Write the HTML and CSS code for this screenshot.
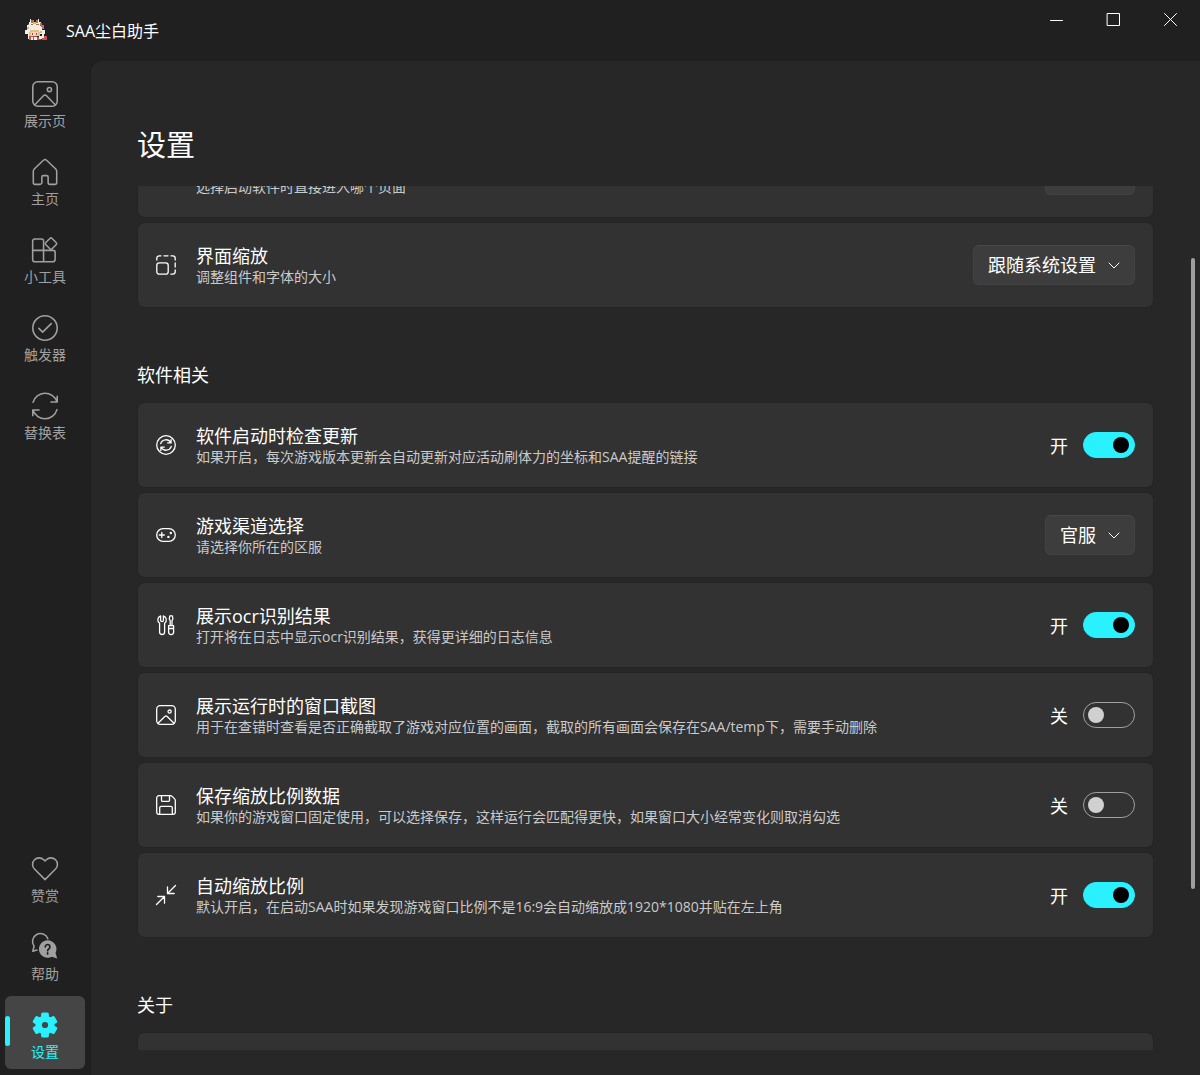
FILE: index.html
```html
<!DOCTYPE html>
<html lang="zh-CN">
<head>
    <meta charset="UTF-8">
    <meta name="viewport" content="width=device-width, initial-scale=1.0">
    <title>SAA尘白助手</title>
    <link rel="stylesheet" href="styles.css">
</head>
<body>
    <header class="titlebar">
        <svg class="app-icon" viewBox="0 0 22 22" shape-rendering="crispEdges" aria-hidden="true">
            <path fill="#8a8580" d="M1 11h3v2H1zM3 5h3v3H3zM17 6h2v4h-2z"/>
            <path fill="#f1ece6" d="M5 0h1v3H5zM13 0h1v3h-1zM4 3h12v3H4zM2 6h15v5H2zM0 11h20v4H0zM3 15h3v5H3zM17 11h2v8h-2z"/>
            <path fill="#a87842" d="M6 1h3v3H6zM11 1h2v3h-2zM6 5h2v1H6zM11 5h3v1h-3z"/>
            <path fill="#bdb8b2" d="M8 3h3v2H8zM2 8h2v2H2zM15 12h2v2h-2z"/>
            <path fill="#d9535a" d="M15 4h2v3h-2zM16 7h2v1h-2z"/>
            <path fill="#e3c184" d="M5 11h9v3H5zM4 13h2v5H4zM13 13h2v4h-2z"/>
            <path fill="#f5d3bd" d="M6 13h7v4H6z"/>
            <path fill="#a04848" d="M7 14h1v2H7zM11 14h1v2h-1zM8 17h4v1H8z"/>
            <path fill="#c8564f" d="M4 17h5v4H4zM12 18h4v3h-4zM19 17h3v4h-3zM17 19h2v2h-2z"/>
            <path fill="#f6f1ee" d="M6 18h2v3H6zM14 17h3v3h-3zM9 18h3v3H9z"/>
        </svg>
        <span class="app-name">SAA尘白助手</span>
        <div class="window-buttons">
            <button type="button" aria-label="最小化"><svg viewBox="0 0 14 14"><path d="M.5 7.5h12"/></svg></button>
            <button type="button" aria-label="最大化"><svg viewBox="0 0 14 14"><path d="M.5 .5h12v12H.5z"/></svg></button>
            <button type="button" aria-label="关闭"><svg viewBox="0 0 14 14"><path d="M.5 .5l12 12M12.5 .5l-12 12"/></svg></button>
        </div>
    </header>

    <div class="window-body">
        <nav class="sidebar">
            <a class="nav-item" href="#display">
                <svg viewBox="0 0 20 20"><rect x=".6" y=".6" width="18.8" height="18.8" rx="3.8"/><circle cx="13.4" cy="6.6" r="1.6"/><path d="M2 18.4l6.8-7a1.7 1.7 0 0 1 2.4 0l6.8 7"/></svg>
                展示页
            </a>
            <a class="nav-item" href="#home">
                <svg viewBox="0 0 20 20"><path d="M8.8 1L1.9 7.5A3 3 0 0 0 1 9.6V18a1.5 1.5 0 0 0 1.5 1.5h3.7a1.4 1.4 0 0 0 1.4-1.4v-4.3a1 1 0 0 1 1-1h2.8a1 1 0 0 1 1 1v4.3a1.4 1.4 0 0 0 1.4 1.4h3.7A1.5 1.5 0 0 0 19 18V9.6a3 3 0 0 0-.9-2.1L11.2 1a1.7 1.7 0 0 0-2.4 0z"/></svg>
                主页
            </a>
            <a class="nav-item" href="#tools">
                <svg viewBox="0 0 20 20"><path d="M8.9 10.3V3a1.4 1.4 0 0 0-1.4-1.4H2A1.5 1.5 0 0 0 .5 3.1v14.2a1.8 1.8 0 0 0 1.8 1.8H16a1.8 1.8 0 0 0 1.8-1.8v-5.500a1.500 1.500 0 0 0-1.500-1.500zM.5 10.300h8.400v8.800"/><rect x="11.200" y="1.700" width="6.800" height="6.800" rx="1.200" transform="rotate(45 14.600 5.100)"/></svg>
                小工具
            </a>
            <a class="nav-item" href="#trigger">
                <svg viewBox="0 0 20 20"><circle cx="10" cy="10" r="9.400"/><path d="M5.300 10.300l2.900 2.900 6.600-6.600"/></svg>
                触发器
            </a>
            <a class="nav-item" href="#table">
                <svg viewBox="0 0 20 20"><path d="M.8 7.200A9.600 9.600 0 0 1 19.100 6.600M14.600 6.900h4.800V2.600M19.200 12.800A9.600 9.600 0 0 1 .9 13.400M5.400 13.100H.6v4.300"/></svg>
                替换表
            </a>
            <a class="nav-item nav-bottom" href="#donate">
                <svg viewBox="0 0 20 20"><path d="M10 18.200L1.900 10A5 5 0 0 1 9 2.900l1 1 1-1A5 5 0 0 1 18.100 10z"/></svg>
                赞赏
            </a>
            <a class="nav-item" href="#help">
                <svg viewBox="0 0 20 20"><path d="M3.800 12.400l-3.200.9 1-3.900A6.100 6.100 0 1 1 12.200 3.600"/><path class="solid" d="M12 4.900a6.700 6.700 0 1 0 3.200 12.600l4.200 1.400-1.300-4.300A6.700 6.700 0 0 0 12 4.900z"/><path class="cut" d="M10.200 9.900a1.800 1.800 0 1 1 2.800 1.500c-.7.500-1 .8-1 1.500M12 14.500v.8"/></svg>
                帮助
            </a>
            <a class="nav-item active" href="#settings" aria-current="page">
                <svg viewBox="0 0 20 20"><g class="solid"><circle cx="10" cy="10" r="7.400"/><rect x="7" y=".4" width="6" height="19.200" rx="1.200"/><rect x="7" y=".4" width="6" height="19.200" rx="1.200" transform="rotate(60 10 10)"/><rect x="7" y=".4" width="6" height="19.200" rx="1.200" transform="rotate(120 10 10)"/></g><circle class="hole" cx="10" cy="10" r="2.400"/></svg>
                设置
            </a>
        </nav>

        <main class="page">
            <div class="content">
                <h1>设置</h1>
                <div class="scroll-area" id="scrollArea">
                    <section class="group">
                        <div class="card">
                            <svg viewBox="0 0 20 20"><path d="M1 1h18v18H1z"/></svg>
                            <div class="card-text">
                                <label for="startPage">启动时进入</label>
                                <p>选择启动软件时直接进入哪个页面</p>
                            </div>
                            <div class="combo">
                                <select id="startPage"><option>主页</option></select>
                                <svg viewBox="0 0 12 12"><path d="M1 4l5 5 5-5"/></svg>
                            </div>
                        </div>
                        <div class="card">
                            <svg viewBox="0 0 20 20"><rect x=".8" y="7.800" width="11.400" height="11.400" rx="2.500"/><path d="M.8 5V3.200A2.400 2.400 0 0 1 3.200.8H5M8 .8h4M15 .8h1.800a2.400 2.400 0 0 1 2.400 2.400V5M19.200 8v4M19.200 15v1.800a2.400 2.400 0 0 1-2.400 2.400H15"/></svg>
                            <div class="card-text">
                                <label for="zoom">界面缩放</label>
                                <p>调整组件和字体的大小</p>
                            </div>
                            <div class="combo">
                                <select id="zoom"><option>跟随系统设置</option></select>
                                <svg viewBox="0 0 12 12"><path d="M1 4l5 5 5-5"/></svg>
                            </div>
                        </div>
                    </section>

                    <section class="group">
                        <h2>软件相关</h2>
                        <div class="card">
                            <svg viewBox="0 0 20 20"><circle cx="10" cy="10" r="9.300"/><path d="M4.700 8.600a5.500 5.500 0 0 1 10-1.100M15.100 4.600v3.300h-3.400M15.300 11.400a5.500 5.500 0 0 1-10 1.100M4.900 15.400v-3.300h3.400"/></svg>
                            <div class="card-text">
                                <label for="checkUpdate">软件启动时检查更新</label>
                                <p>如果开启，每次游戏版本更新会自动更新对应活动刷体力的坐标和SAA提醒的链接</p>
                            </div>
                            <span class="state">开</span>
                            <input class="switch" type="checkbox" role="switch" id="checkUpdate" checked>
                        </div>
                        <div class="card">
                            <svg viewBox="0 0 20 20"><rect x=".7" y="3.700" width="18.600" height="12.600" rx="6.300"/><path d="M5.800 7.500v5M3.300 10h5"/><circle class="dot" cx="14.800" cy="8" r="1.200"/><circle class="dot" cx="12.400" cy="11.900" r="1.200"/></svg>
                            <div class="card-text">
                                <label for="server">游戏渠道选择</label>
                                <p>请选择你所在的区服</p>
                            </div>
                            <div class="combo">
                                <select id="server"><option>官服</option></select>
                                <svg viewBox="0 0 12 12"><path d="M1 4l5 5 5-5"/></svg>
                            </div>
                        </div>
                        <div class="card">
                            <svg viewBox="0 0 20 20"><path d="M4.600.8v4.400a1.400 1.400 0 0 0 2.800 0V.8a4.200 4.200 0 0 1 1.200 7.400v8.800a2.200 2.200 0 0 1-5 0V8.200A4.200 4.200 0 0 1 4.600.8zM13.800.8h2.600l.5 3.200-.9 1.600v5h-1.800v-5L13.300 4zM12.600 10.600h5v6.500a2.500 2.500 0 0 1-5 0zM12.600 13.500h5"/></svg>
                            <div class="card-text">
                                <label for="showOcr">展示ocr识别结果</label>
                                <p>打开将在日志中显示ocr识别结果，获得更详细的日志信息</p>
                            </div>
                            <span class="state">开</span>
                            <input class="switch" type="checkbox" role="switch" id="showOcr" checked>
                        </div>
                        <div class="card">
                            <svg viewBox="0 0 20 20"><rect x=".7" y=".7" width="18.600" height="18.600" rx="3.500"/><circle cx="13.600" cy="6.600" r="1.600"/><path d="M2 18.300l6.800-6.800a1.700 1.700 0 0 1 2.400 0l6.800 6.800"/></svg>
                            <div class="card-text">
                                <label for="showShot">展示运行时的窗口截图</label>
                                <p>用于在查错时查看是否正确截取了游戏对应位置的画面，截取的所有画面会保存在SAA/temp下，需要手动删除</p>
                            </div>
                            <span class="state">关</span>
                            <input class="switch" type="checkbox" role="switch" id="showShot">
                        </div>
                        <div class="card">
                            <svg viewBox="0 0 20 20"><path d="M2.900.7h11.500a2.500 2.500 0 0 1 1.700.7l2.500 2.500a2.500 2.500 0 0 1 .7 1.700v11.500a2.200 2.200 0 0 1-2.200 2.200H2.900a2.200 2.200 0 0 1-2.200-2.200V2.900A2.200 2.200 0 0 1 2.900.7zM5.500.9v4.300a1.200 1.200 0 0 0 1.200 1.200h5.600a1.200 1.200 0 0 0 1.200-1.200V.9M3.700 19.100v-6.300a1.500 1.500 0 0 1 1.500-1.500h9.600a1.500 1.500 0 0 1 1.500 1.500v6.300"/></svg>
                            <div class="card-text">
                                <label for="saveScale">保存缩放比例数据</label>
                                <p>如果你的游戏窗口固定使用，可以选择保存，这样运行会匹配得更快，如果窗口大小经常变化则取消勾选</p>
                            </div>
                            <span class="state">关</span>
                            <input class="switch" type="checkbox" role="switch" id="saveScale">
                        </div>
                        <div class="card">
                            <svg viewBox="0 0 20 20"><path d="M19.500.5l-8 8M11.500 1.800v6.700h6.700M.5 19.500l8-8M1.800 11.500h6.700v6.700"/></svg>
                            <div class="card-text">
                                <label for="autoScale">自动缩放比例</label>
                                <p>默认开启，在启动SAA时如果发现游戏窗口比例不是16:9会自动缩放成1920*1080并贴在左上角</p>
                            </div>
                            <span class="state">开</span>
                            <input class="switch" type="checkbox" role="switch" id="autoScale" checked>
                        </div>
                    </section>

                    <section class="group">
                        <h2>关于</h2>
                        <div class="card"></div>
                    </section>
                </div>
            </div>
            <div class="scrollbar" aria-hidden="true"><div class="thumb"></div></div>
        </main>
    </div>

    <script>
        var scrollArea = document.getElementById("scrollArea");
        scrollArea.scrollTop = 54;

        document.querySelectorAll(".switch").forEach(function(input) {
            input.addEventListener("change", function() {
                input.previousElementSibling.textContent = input.checked ? "开" : "关";
            });
        });
    </script>
</body>
</html>
```
FILE: styles.css
```css
* {
    box-sizing: border-box;
}

body {
    display: flex;
    flex-direction: column;
    height: 100vh;
    margin: 0;
    background-color: #202020;
    color: #fff;
    font-family: "Open Sans", "Noto Sans CJK SC", sans-serif;
    font-size: 18px;
    overflow: hidden;
}

svg {
    flex: none;
    fill: none;
    overflow: visible;
    stroke: currentColor;
    stroke-linecap: round;
    stroke-linejoin: round;
}

h1, h2, p {
    margin: 0;
}

/* Title bar */
.titlebar {
    display: flex;
    align-items: center;
    height: 60px;
    padding: 0 1px 0 25px;
}

.app-icon {
    width: 22px;
    height: 22px;
    stroke: none;
}

.app-name {
    margin-left: 19px;
    font-size: 16px;
}

.window-buttons {
    display: flex;
    align-self: flex-start;
    margin-left: auto;
}

.window-buttons button {
    display: flex;
    align-items: center;
    justify-content: center;
    width: 57px;
    height: 40px;
    padding: 0;
    border: none;
    background: none;
    color: #fff;
}

.window-buttons svg {
    width: 14px;
    height: 14px;
}

.window-body {
    display: flex;
    flex: 1;
    min-height: 0;
}

/* Sidebar */
.sidebar {
    display: flex;
    flex-direction: column;
    gap: 5px;
    width: 90px;
    padding: 5px 5px 6px;
}

.nav-item {
    display: flex;
    flex-direction: column;
    align-items: center;
    gap: 4px;
    height: 73px;
    padding-top: 16px;
    border-radius: 6px;
    color: #a0a0a0;
    font-size: 14px;
    line-height: 20px;
    text-decoration: none;
}

.nav-item svg {
    width: 26px;
    height: 26px;
    stroke-width: 1.2;
}

.nav-item .solid {
    fill: currentColor;
    stroke: none;
}

.nav-item .cut {
    stroke: #202020;
    stroke-width: 1.3;
}

.nav-bottom {
    margin-top: auto;
}

.nav-item.active {
    position: relative;
    background-color: #454545;
    color: #29f1ff;
}

.nav-item.active::before {
    content: "";
    position: absolute;
    top: 20px;
    left: 0;
    width: 5px;
    height: 30px;
    border-radius: 3px;
    background-color: #29f1ff;
}

.nav-item .hole {
    fill: #454545;
    stroke: none;
}

/* Page */
.page {
    display: flex;
    flex: 1;
    min-width: 0;
    border-top: 1px solid #1e1e1e;
    border-left: 1px solid #1e1e1e;
    border-top-left-radius: 12px;
    background-color: #272727;
}

.content {
    display: flex;
    flex-direction: column;
    flex: 1;
    min-width: 0;
    padding: 64px 37px 25px 46px;
}

h1 {
    margin-bottom: 21px;
    font-size: 29px;
    font-weight: 400;
    line-height: 40px;
}

.scroll-area {
    flex: 1;
    min-height: 0;
    overflow: hidden;
}

.group {
    display: flex;
    flex-direction: column;
    gap: 4px;
    margin-bottom: 54px;
}

h2 {
    margin-bottom: 10px;
    font-size: 18px;
    font-weight: 400;
    line-height: 26px;
}

.card {
    display: flex;
    align-items: center;
    min-height: 86px;
    padding: 0 18px;
    border: 1px solid #242424;
    border-radius: 7px;
    background-color: #323232;
    background-clip: padding-box;
}

.card > svg {
    width: 20px;
    height: 20px;
    stroke-width: 1.3;
}

.card .dot {
    fill: currentColor;
    stroke: none;
}

.card-text {
    display: flex;
    flex: 1;
    flex-direction: column;
    min-width: 0;
    margin: 0 20px;
    padding-top: 2px;
}

.card-text label {
    line-height: 22px;
}

.card-text p {
    color: #cacaca;
    font-size: 14px;
    line-height: 20px;
}

/* Drop-downs */
.combo {
    display: grid;
    align-items: center;
}

.combo select,
.combo svg {
    grid-area: 1 / 1;
}

.combo select {
    appearance: none;
    height: 40px;
    padding: 0 38px 0 14px;
    border: 1px solid #434343;
    border-top-color: #484848;
    border-radius: 6px;
    background-color: #3d3d3d;
    color: #fff;
    font: inherit;
}

.combo svg {
    justify-self: end;
    width: 12px;
    height: 12px;
    margin-right: 15px;
    pointer-events: none;
}

/* Switches */
.state {
    margin-right: 15px;
}

.switch {
    appearance: none;
    display: flex;
    align-items: center;
    width: 52px;
    height: 26px;
    margin: 0;
    padding: 0 4px;
    border: 1px solid #a0a0a0;
    border-radius: 13px;
}

.switch::before {
    content: "";
    width: 16px;
    height: 16px;
    border-radius: 50%;
    background-color: #d0d0d0;
}

.switch:checked {
    justify-content: flex-end;
    padding-right: 5px;
    border-color: #29f1ff;
    background-color: #29f1ff;
}

.switch:checked::before {
    background-color: #000;
}

/* Scroll indicator */
.scrollbar {
    display: flex;
    padding: 197px 5px 186px 0;
}

.thumb {
    width: 4px;
    border-radius: 2px;
    background-color: #9f9f9f;
}
```
